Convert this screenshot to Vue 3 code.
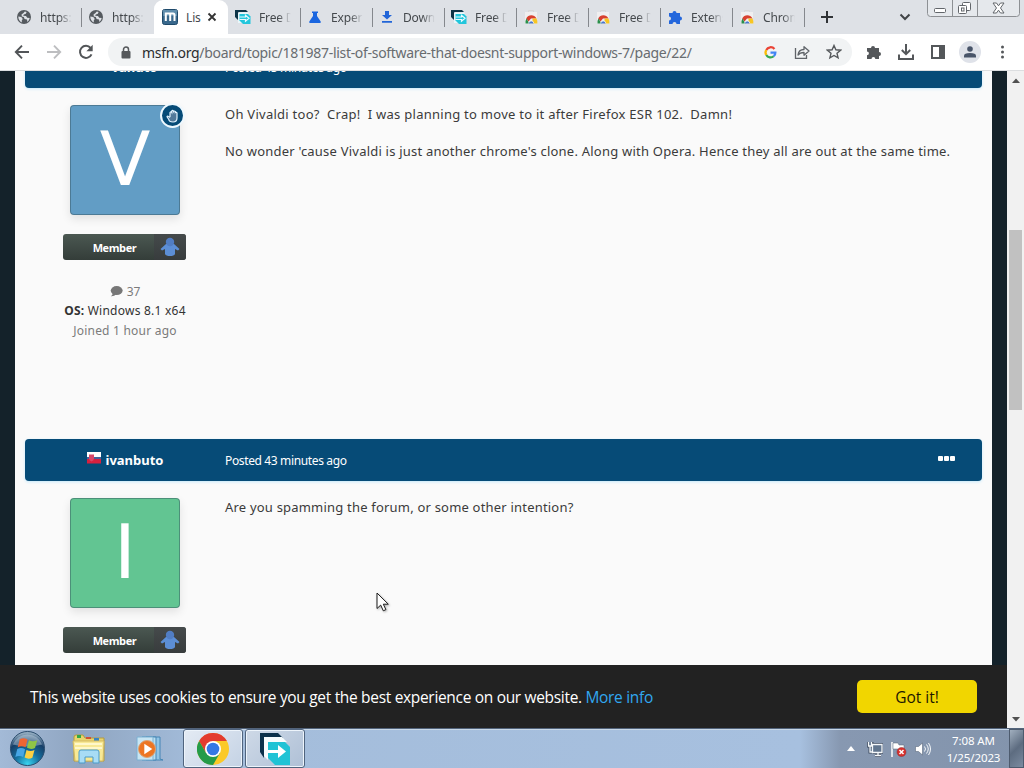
<script setup>
import { ref } from 'vue'

const tabs = ref([
  { icon: 'globe', title: 'https://' },
  { icon: 'globe', title: 'https://' },
  { icon: 'msfn', title: 'Lis', active: true },
  { icon: 'fdm', title: 'Free D' },
  { icon: 'flask', title: 'Experi' },
  { icon: 'down', title: 'Downl' },
  { icon: 'fdm', title: 'Free D' },
  { icon: 'store', title: 'Free D' },
  { icon: 'store', title: 'Free D' },
  { icon: 'puzzle', title: 'Extens' },
  { icon: 'store', title: 'Chrom' },
])

const posts = ref([
  {
    id: 1,
    author: 'vanuto',
    posted: 'Posted 45 minutes ago',
    letter: 'V',
    color: 'blue',
    isNew: true,
    paragraphs: [
      { id: 'a', text: 'Oh Vivaldi too?\u00a0 Crap!\u00a0 I was planning to move to it after Firefox ESR 102.\u00a0 Damn!' },
      { id: 'b', text: "No wonder 'cause Vivaldi is just another chrome's clone. Along with Opera. Hence they all are out at the same time." },
    ],
    stats: { count: 37, os: 'Windows 8.1 x64', joined: 'Joined 1 hour ago' },
  },
  {
    id: 2,
    author: 'ivanbuto',
    posted: 'Posted 43 minutes ago',
    letter: 'I',
    color: 'green',
    paragraphs: [{ id: 'c', text: 'Are you spamming the forum, or some other intention?' }],
  },
])
</script>

<template>
  <div class="screen">
    <header class="tabstrip">
      <div v-for="(tab, i) in tabs" :key="i" class="tab" :class="{ 'tab--active': tab.active, 'tab--before': i === 1 }">
        <svg class="tab__icon" viewBox="0 0 16 16">
          <g v-if="tab.icon === 'globe'">
            <circle cx="8" cy="8" r="7" fill="#555a5f" />
            <path d="M2.300 7.500l3 .6 1.500 1.800-1 1.400v2.200Q2.300 11.500 2.300 7.500zM8.800 2.400l1.800.7-.8 1.700-2 .6-.6 1.400 2.800.3 1.200 1.700 2.500.2q-.3 2.600-2.300 3.900l-.4-2.400-2.400-.6-.8-2-2-.5-.3-1.800 2-1.500z" fill="#dee1e6" />
          </g>
          <g v-else-if="tab.icon === 'msfn'">
            <rect x=".5" y=".5" width="15" height="15" rx="2" fill="#39688c" stroke="#1f4a6b" />
            <path d="M1 1h14v6H1z" fill="#6f9cb9" opacity=".7" />
            <path d="M3.800 12V4.500h7.200q1.500 0 1.500 1.500v6M8.200 4.500V12" fill="none" stroke="#fff" stroke-width="2" />
          </g>
          <g v-else-if="tab.icon === 'fdm'">
            <path d="M0 1h11l2 2H3.500v8.500L0 8z" fill="#0d3447" />
            <path d="M3 3.500h10.500V14H3z" fill="#e9f7fa" />
            <path d="M4.500 5H13l2.500 2.500V15H8l-3.500-3.500z" fill="#22c6dc" />
            <path d="M4.500 8h6V6.200l3.500 3-3.500 3v-1.700h-6" fill="none" stroke="#e9fbff" stroke-width="1.200" />
          </g>
          <path v-else-if="tab.icon === 'flask'" d="M5 2.500h6V4h-1v3l3.700 5.500q.6 1.500-1 1.500H3.300q-1.600 0-1-1.500L6 7V4H5z" fill="#1a66e0" />
          <path v-else-if="tab.icon === 'down'" d="M6 2h4v4h3l-5 4.500L3 6h3zM3 12h10v1.800H3z" fill="#2265d8" />
          <g v-else-if="tab.icon === 'store'">
            <path d="M2 3h12v11.500H2z" fill="#f0eff0" />
            <path d="M5.500 3V1.500h5V3" fill="none" stroke="#d8d6d6" />
            <path d="M3.200 9.500Q5 6.200 8.300 6.200T13.500 9.500H8l-2.500 3z" fill="#d8402f" />
            <path d="M2.500 14.500q-.3-3 .9-5l3.100 5z" fill="#2a8f4c" />
            <path d="M9.500 9.500h4q1.200 2.300.8 5H9.500z" fill="#f8c623" />
            <path d="M5.600 14.500a2.600 2.600 0 0 1 5.200 0" fill="#4a76cf" stroke="#f5f5f5" stroke-width=".8" />
          </g>
          <path v-else d="M2 4h3.500a2 2 0 1 1 4 0H13v3.500a2 2 0 1 1 0 4V15H9.500a2 2 0 0 0-4 0H2v-3.500a2 2 0 0 0 0-4z" fill="#2467dc" />
        </svg>
        <span class="tab__title">{{ tab.title }}</span>
        <svg v-if="tab.active" class="tab__close" viewBox="0 0 10 10"><path d="M1.500 1.500l7 7m0-7l-7 7" stroke="#333" stroke-width="1.800" /></svg>
      </div>
      <svg class="tabstrip__plus" viewBox="0 0 14 14"><path d="M7 1v12M1 7h12" stroke="#303336" stroke-width="2" /></svg>
      <svg class="tabstrip__chevron" viewBox="0 0 12 12"><path d="M1.500 3.500L6 8l4.500-4.500" fill="none" stroke="#414447" stroke-width="2" /></svg>
      <svg class="tabstrip__window" viewBox="0 0 93 17">
        <path d="M.5 0v13.500q0 3 3 3h86q3 0 3-3V0M25.500 0v16M50.500 0v16" fill="#e5e8ec" stroke="#8d9094" />
        <g fill="#fff" stroke="#62666b">
          <rect x="7.500" y="8.500" width="11" height="4" rx="1" />
          <rect x="35.500" y="2.500" width="8" height="8" rx="1" />
          <rect x="31.500" y="5.500" width="8" height="8" rx="1" />
          <rect x="34.500" y="8" width="2.500" height="3" />
          <path d="M66 3h3.500l2 2.800 2-2.800H77l-3.500 5 3.500 5h-3.500l-2-2.800-2 2.800H66l3.500-5z" />
        </g>
      </svg>
    </header>

    <nav class="toolbar">
      <svg class="toolbar__nav" viewBox="0 0 16 16"><path d="M15 8H2m6-6.300L1.800 8 8 14.300" fill="none" stroke="#525558" stroke-width="1.900" /></svg>
      <svg class="toolbar__nav" viewBox="0 0 16 16"><path d="M1 8h13M8 1.700L14.200 8 8 14.300" fill="none" stroke="#bdbec0" stroke-width="1.900" /></svg>
      <svg class="toolbar__nav" viewBox="0 0 16 16"><path d="M13.500 10.300A6 6 0 1 1 12.600 4" fill="none" stroke="#525558" stroke-width="2" /><path d="M14.700.8v6.400H8.400z" fill="#525558" /></svg>
      <div class="omnibox">
        <svg class="omnibox__lock" viewBox="0 0 10 13"><path d="M2.500 6V3.500a2.500 2.500 0 0 1 5 0V6" fill="none" stroke="#55585b" stroke-width="1.500" /><rect x=".5" y="5" width="9" height="7.500" rx="1" fill="#55585b" /></svg>
        <span class="omnibox__url"><b>msfn.org</b>/board/topic/181987-list-of-software-that-doesnt-support-windows-7/page/22/</span>
        <svg class="omnibox__icon omnibox__icon--google" viewBox="0 0 16 16" fill="none" stroke-width="2.400">
          <path d="M12.200 4.300A5.200 5.200 0 0 0 3.500 5.300" stroke="#ea4335" />
          <path d="M3.500 5.300a5.200 5.200 0 0 0 0 5.400" stroke="#fbbc05" />
          <path d="M3.500 10.700a5.200 5.200 0 0 0 7.900 1.300" stroke="#34a853" />
          <path d="M11.400 12A5 5 0 0 0 13.200 8H8" stroke="#4285f4" />
        </svg>
        <svg class="omnibox__icon" viewBox="0 0 16 16" fill="none" stroke="#5f6368" stroke-width="1.300"><path d="M1.500 4v10.300h11V11" /><path d="M4 11c.4-3.700 2.500-5.500 6-5.500V2.700L15 7l-5 4.200V8.500C7.500 8.500 5.500 9 4 11z" stroke-linejoin="round" /></svg>
        <svg class="omnibox__icon omnibox__icon--star" viewBox="0 0 16 16"><path d="M8 1.500l1.900 4.300 4.700.4-3.600 3.100 1.100 4.600L8 11.500l-4.100 2.400L5 9.300 1.400 6.200l4.700-.4z" fill="none" stroke="#55585b" stroke-width="1.400" /></svg>
      </div>
      <svg class="toolbar__icon" viewBox="0 0 16 16"><path d="M1 4h4a2 2 0 1 1 4 0h4v4a2 2 0 1 1 0 4v3H9.300a1.900 1.900 0 0 0-3.800 0H1v-3.800a1.900 1.900 0 0 0 0-3.800z" fill="#54575a" /></svg>
      <svg class="toolbar__icon" viewBox="0 0 16 16"><path d="M8 0v10M3.800 6L8 10.200 12.200 6M1 10.500V15h14v-4.500" fill="none" stroke="#54575a" stroke-width="2" /></svg>
      <svg class="toolbar__icon" viewBox="0 0 16 16"><path d="M1 1h14v14H1zm2 2v10h6V3z" fill="#54575a" fill-rule="evenodd" /></svg>
      <span class="toolbar__profile"><svg viewBox="0 0 12 12"><circle cx="6" cy="3" r="2.800" fill="#485469" /><path d="M0 11.500V9.800Q0 7 6 7t6 2.800v1.700z" fill="#485469" /></svg></span>
      <svg class="toolbar__icon toolbar__icon--menu" viewBox="0 0 16 16" fill="#54575a"><circle cx="8.500" cy="3" r="1.500" /><circle cx="8.500" cy="8" r="1.500" /><circle cx="8.500" cy="13" r="1.500" /></svg>
    </nav>

    <div class="viewport">
      <main class="page">
        <div class="topic">
          <article v-for="post in posts" :key="post.id" class="post">
            <div class="post__header">
              <h3 class="post__author">
                <svg class="flag" viewBox="0 0 14 12"><path d="M0 0h14v5H0z" fill="#fff" /><path d="M0 5h14v3H0z" fill="#45609b" /><path d="M0 7h14v4.500H0z" fill="#d6213f" /><path d="M2 2.500h5v4Q7 8.500 4.500 9.500 2 8.500 2 6.500z" fill="#d9476a" /></svg>
                <span>{{ post.author }}</span>
              </h3>
              <span class="post__date">{{ post.posted }}</span>
              <span v-if="post.id !== 1" class="post__menu"><i></i><i></i><i></i></span>
            </div>
            <div class="post__body">
              <aside class="author">
                <div class="avatar" :class="'avatar--' + post.color">
                  <span class="avatar__letter">{{ post.letter }}</span>
                  <span v-if="post.isNew" class="avatar__badge">
                    <svg viewBox="0 0 14 14"><path d="M4 8V3.500q.8-1.300 1.700 0V2q.9-1.400 1.800 0v.6q.9-1.200 1.800 0v1q1.100-.8 1.700.4V9q0 4-4 4T2.800 10.500L1 7.800q.6-1.500 3 .7" fill="#52799a" stroke="#e2f3ff" stroke-width="1.200" /></svg>
                  </span>
                </div>
                <div class="rank">
                  <span class="rank__name">Member</span>
                  <span class="rank__icon">
                    <svg viewBox="0 0 20 20"><path d="M6 7h8l5.500 5-1.500 1.500-3-1.500v5q-1 2-5 2t-5-2v-5l-3 1.500L.5 12z" fill="#5c8ed6" /><circle cx="10" cy="5" r="4.200" fill="#517dc4" /></svg>
                  </span>
                </div>
                <ul v-if="post.stats" class="stats">
                  <li class="stats__muted">
                    <svg class="stats__bubble" viewBox="0 0 14 12"><ellipse cx="7.200" cy="5" rx="6.500" ry="4.900" fill="#777" /><path d="M3 7q0 3-2.200 4.200Q4.500 11.500 7 8.800z" fill="#777" /></svg>
                    <span>{{ post.stats.count }}</span>
                  </li>
                  <li class="stats__os"><b>OS:</b> {{ post.stats.os }}</li>
                  <li class="stats__muted stats__joined">{{ post.stats.joined }}</li>
                </ul>
              </aside>
              <div class="post__content">
                <p v-for="p in post.paragraphs" :key="p.id" :class="'line line--' + p.id">{{ p.text }}</p>
              </div>
            </div>
          </article>
        </div>
        <div class="cookies">
          <span class="cookies__text">This website uses cookies to ensure you get the best experience on our website. <a>More info</a></span>
          <button class="cookies__button">Got it!</button>
        </div>
      </main>
      <div class="scrollbar">
        <svg viewBox="0 0 8 5"><path d="M0 5l4-4.500L8 5z" fill="#505050" /></svg>
        <div class="scrollbar__thumb"></div>
        <svg viewBox="0 0 8 5"><path d="M0 0l4 4.500L8 0z" fill="#505050" /></svg>
      </div>
    </div>

    <footer class="taskbar">
      <div class="taskbar__start">
        <svg viewBox="0 0 38 38">
          <defs>
            <radialGradient id="orb" cx=".5" cy=".95" r=".9">
              <stop offset="0" stop-color="#39d4ef" />
              <stop offset=".4" stop-color="#15709f" />
              <stop offset=".75" stop-color="#173f68" />
              <stop offset="1" stop-color="#8fa9be" />
            </radialGradient>
          </defs>
          <circle cx="19" cy="19" r="17.500" fill="url(#orb)" stroke="#294b6c" />
          <path d="M4 15A16 16 0 0 1 34 15Q19 19 4 15z" fill="#d5e3ed" opacity=".4" />
          <path d="M11 9.500q4-2 8 .3l-2 8q-4-2-8 0z" fill="#ee6534" />
          <path d="M20.500 10.500q4 2 8.500 0l-2.300 8q-4 2-8.200-.2z" fill="#90c646" />
          <path d="M8.500 19.500q4-2 8 .2l-2 8q-4-2-8 0z" fill="#47a6e6" />
          <path d="M18 20.500q4 2 8.200 0l-2.200 8q-4 2-8-.2z" fill="#fbd043" />
        </svg>
      </div>
      <div class="taskbar__item taskbar__item--explorer">
        <svg viewBox="0 0 34 30">
          <path d="M2 3q0-2 2-2h7l2 3h19v23H2z" fill="#e9d46e" stroke="#b49b3f" />
          <path d="M5 1h4v3H5z" fill="#31a845" /><path d="M14 3h5v2h-5z" fill="#d05334" /><path d="M22 4h5v3h-5z" fill="#3784c4" />
          <path d="M1 7h31l-1 20H3z" fill="#f8e995" stroke="#d2b961" />
          <path d="M3 10h27M3 14h27" stroke="#fff8ca" stroke-width="2" />
          <path d="M7 29V18q0-2 2-2h16q2 0 2 2v11h-6v-6h-8v6z" fill="#a8dcf5" stroke="#4b9bc9" />
        </svg>
      </div>
      <div class="taskbar__item taskbar__item--player">
        <svg viewBox="0 0 28 26">
          <path d="M10 1h14v22l3 1H10z" fill="#91c5e6" stroke="#4786b5" /><path d="M6 1h14v23H6z" fill="#b8def0" stroke="#4786b5" /><path d="M1 1h16v23H1z" fill="#c8e5f3" stroke="#7bb0d2" />
          <circle cx="11" cy="13" r="8.500" fill="#ed7522" stroke="#d9a377" /><path d="M8.300 7.800l8 5.200-8 5.200z" fill="#fff" />
        </svg>
      </div>
      <div class="taskbar__item taskbar__item--open">
        <svg viewBox="0 0 32 32">
          <circle cx="16" cy="16" r="16" fill="#fbc928" />
          <path d="M2.140 8A16 16 0 0 1 29.860 8H16l-6.930 12z" fill="#e33b2e" />
          <path d="M2.140 8A16 16 0 0 0 16 32l6.930-12H9.070z" fill="#259b49" />
          <circle cx="16" cy="16" r="8" fill="#fff" /><circle cx="16" cy="16" r="6.300" fill="#3478e5" />
        </svg>
      </div>
      <div class="taskbar__item taskbar__item--open taskbar__item--fdm">
        <svg viewBox="0 0 32 32">
          <path d="M1 0h18l5 5H5v20l-4-6z" fill="#0c314b" />
          <path d="M5 4h18l5 5H9v18l-4-4z" fill="#f7fcfd" />
          <path d="M9 9h17l5 5v18H16l-7-7z" fill="#20c3d5" />
          <path d="M9 17h10v-5l8 6.500-8 6.500v-5H9z" fill="#fff" />
        </svg>
      </div>
      <div class="tray">
        <svg class="tray__up" viewBox="0 0 8 5"><path d="M0 5l4-5 4 5z" fill="#fff" /></svg>
        <svg class="tray__icon" viewBox="0 0 16 16"><path d="M6 3.500h9v8H6M8 14.500h6M11 11.500v3M1 1v4h4V1M3 5v6h4" fill="none" stroke="#3f4d60" stroke-width="3" /><path d="M5.500 3.500H15v8H5.500zM8 14.500h6M11 11.500v3M1.500 1v4h3V1M3 5v6h3" fill="#60758e" stroke="#f5f8fa" stroke-width="1.300" /></svg>
        <svg class="tray__icon" viewBox="0 0 16 16"><path d="M1 1v15" stroke="#fff" stroke-width="1.500" /><path d="M2 2h5l1 2h5v6H9L7 8H2z" fill="#fff" stroke="#576477" stroke-width=".5" /><circle cx="10.500" cy="11" r="4.500" fill="#d9302c" stroke="#8a2d32" stroke-width=".5" /><path d="M8.500 9l4 4m0-4l-4 4" stroke="#fff" stroke-width="1.500" /></svg>
        <svg class="tray__icon" viewBox="0 0 16 16"><path d="M.5 5.500h3L7.500 2v12l-4-3.500h-3z" fill="#fff" stroke="#4b596c" stroke-width=".5" /><path d="M9.500 5.500q2 2.500 0 5M11.500 3.500q3.500 4.500 0 9M13.500 2q4 6 0 12" fill="none" stroke="#f5f8fa" /></svg>
      </div>
      <div class="clock">
        <span>7:08 AM</span>
        <span>1/25/2023</span>
      </div>
      <div class="taskbar__desktop"></div>
    </footer>

    <svg class="cursor" viewBox="0 0 14 20"><path d="M1 1v15.500l3.700-3.400 2.600 5.700 2.600-1.200-2.600-5.400h5z" fill="#fff" stroke="#1b1b1b" /></svg>
  </div>
</template>

<style>
body {
  margin: 0;
  overflow: hidden;
}
</style>

<style scoped>
.screen {
  position: relative;
  width: 1024px;
  height: 768px;
  display: flex;
  flex-direction: column;
  overflow: hidden;
  font-family: "Noto Sans", "Open Sans", sans-serif;
}

svg {
  display: block;
  flex: none;
}

/* tabs */
.tabstrip {
  height: 34px;
  box-sizing: border-box;
  padding-left: 10px;
  flex: none;
  display: flex;
  align-items: center;
  background: #dee1e6;
}

.tab {
  width: 72px;
  height: 34px;
  box-sizing: border-box;
  padding-left: 6px;
  display: flex;
  align-items: center;
  gap: 8px;
  flex: none;
  font-size: 12px;
  color: #45494d;
  background: linear-gradient(#85888d, #85888d) no-repeat right 8px / 1px 19px;
}

.tab__icon {
  width: 16px;
  height: 16px;
}

.tab__title {
  width: 32px;
  overflow: hidden;
  white-space: nowrap;
  letter-spacing: -0.15px;
  mask-image: linear-gradient(90deg, #000 60%, transparent);
}

.tab--before {
  background: none;
}

.tab--active {
  width: 74px;
  margin-right: 1px;
  padding-left: 8px;
  background: #fff;
  border-radius: 9px 9px 0 0;
}

.tab--active .tab__title {
  width: 15px;
  mask-image: none;
}

.tab__close {
  width: 10px;
  height: 10px;
  margin-left: -2px;
}

.tabstrip__plus {
  width: 14px;
  height: 14px;
  margin-left: 15px;
}

.tabstrip__chevron {
  width: 12px;
  height: 12px;
  margin-left: auto;
}

.tabstrip__window {
  width: 93px;
  height: 17px;
  margin: 0 4px 0 16px;
  align-self: flex-start;
}

/* toolbar */
.toolbar {
  height: 37px;
  box-sizing: border-box;
  padding: 0 14px;
  border-bottom: 1px solid #dcdee0;
  flex: none;
  display: flex;
  align-items: center;
  gap: 16px;
  background: #fff;
}

.toolbar__nav,
.toolbar__icon {
  width: 16px;
  height: 16px;
}

.omnibox {
  width: 744px;
  height: 28px;
  box-sizing: border-box;
  padding: 0 10px 0 13px;
  margin-left: -2px;
  margin-right: -2px;
  border-radius: 14px;
  flex: none;
  display: flex;
  align-items: center;
  background: #f1f3f4;
}

.omnibox__lock {
  width: 10px;
  height: 13px;
}

.omnibox__url {
  margin: 0 auto 0 11px;
  font-size: 14px;
  color: #686c70;
  white-space: nowrap;
  letter-spacing: -0.305px;
}

.omnibox__url b {
  font-weight: 400;
  color: #2a2c2e;
}

.omnibox__icon {
  width: 16px;
  height: 16px;
  margin-left: 16px;
}

.omnibox__icon--google {
  width: 15px;
  height: 15px;
}

.toolbar__profile {
  width: 22px;
  height: 22px;
  margin: 0 -3px;
  border-radius: 50%;
  display: grid;
  place-items: center;
  background: #dfe2e9;
}

.toolbar__profile svg {
  width: 12px;
  height: 12px;
}

/* page */
.viewport {
  height: 657px;
  flex: none;
  display: flex;
}

.page {
  width: 1007px;
  height: 657px;
  display: flex;
  flex-direction: column;
  background: #14222a;
}

.topic {
  height: 594px;
  margin: 0 15px;
  overflow: hidden;
  background: #fafafa;
}

.post {
  height: 393px;
  padding: 0 10px;
}

.post:first-child {
  margin-top: -25px;
}

.post__header {
  height: 42px;
  border-radius: 4px;
  display: flex;
  align-items: center;
  background: #064b77;
  box-shadow: 0 1px 3px #c5e9fb;
  color: #fff;
}

.post__author {
  width: 200px;
  margin: 0;
  display: flex;
  justify-content: center;
  gap: 5px;
  font-size: 13px;
  font-weight: 700;
}

.flag {
  width: 14px;
  height: 12px;
  margin-top: 1px;
}

.post__date {
  padding-top: 1px;
  font-size: 12px;
  letter-spacing: -0.36px;
}

.post__menu {
  margin: -3px 27px 0 auto;
  display: flex;
  gap: 1px;
}

.post__menu i {
  width: 5px;
  height: 5px;
  border-radius: 1px;
  background: #fff;
}

.post__body {
  display: flex;
}

.author {
  width: 200px;
  padding-top: 17px;
  flex: none;
  display: flex;
  flex-direction: column;
  align-items: center;
}

.avatar {
  position: relative;
  width: 110px;
  height: 110px;
  box-sizing: border-box;
  border: 1px solid rgba(50, 80, 90, 0.45);
  border-radius: 4px;
  display: flex;
  justify-content: center;
  box-shadow: 0 4px 10px rgba(0, 0, 0, 0.1);
}

.avatar--blue {
  background: #629dc5;
}

.avatar--green {
  background: #62c592;
}

.avatar__letter {
  font-family: "DejaVu Sans", sans-serif;
  font-size: 74px;
  line-height: 106px;
  color: #fff;
}

.avatar__badge {
  position: absolute;
  top: -3px;
  right: -6px;
  width: 21px;
  height: 21px;
  border: 2px solid #eff9ff;
  border-radius: 50%;
  display: grid;
  place-items: center;
  background: #064b77;
}

.avatar__badge svg {
  width: 14px;
  height: 14px;
}

.rank {
  width: 123px;
  height: 26px;
  margin-top: 19px;
  margin-right: 1px;
  border-radius: 3px;
  overflow: hidden;
  display: flex;
  align-items: center;
  background: linear-gradient(#4b5852, #343d39);
}

.rank__name {
  width: 91px;
  padding-left: 12px;
  box-sizing: border-box;
  text-align: center;
  font: 700 11px "Open Sans", sans-serif;
  letter-spacing: -0.4px;
  color: #fff;
}

.rank__icon {
  width: 32px;
  height: 26px;
  display: grid;
  place-items: center;
  background: linear-gradient(#454a4b, #383c3d);
}

.rank__icon svg {
  width: 20px;
  height: 20px;
}

.stats {
  width: 200px;
  margin: 22px 0 0;
  padding: 0;
  list-style: none;
  text-align: center;
  font-size: 12px;
  line-height: 19.500px;
  color: #333;
  white-space: nowrap;
}

.stats li:first-child {
  height: 19px;
  display: flex;
  align-items: center;
  justify-content: center;
  gap: 4px;
}

.stats__muted {
  color: #7b7b7b;
}

.stats__os {
  letter-spacing: 0.24px;
}

.stats__joined {
  letter-spacing: 0.22px;
}

.stats__bubble {
  width: 13px;
  height: 11px;
}

.post__content {
  padding-top: 17px;
}

.line {
  margin: 0 0 18px;
  font-size: 13px;
  line-height: 19px;
  letter-spacing: 0.22px;
  color: #3b3b3b;
  white-space: nowrap;
}

.line--a {
  letter-spacing: 0.265px;
}

.line--c {
  letter-spacing: 0.2px;
}

/* cookie bar */
.cookies {
  height: 63px;
  padding: 0 30px;
  display: flex;
  align-items: center;
  justify-content: space-between;
  background: #222;
  color: #fff;
  font-family: "Open Sans", sans-serif;
}

.cookies__text {
  font-size: 15.500px;
  letter-spacing: -0.32px;
  white-space: nowrap;
}

.cookies__text a {
  color: #31a8f0;
}

.cookies__button {
  width: 120px;
  height: 33px;
  border: 0;
  border-radius: 5px;
  background: #f1d600;
  color: #1d1800;
  font: 15.500px "Open Sans", sans-serif;
}

/* scrollbar */
.scrollbar {
  width: 17px;
  height: 657px;
  box-sizing: border-box;
  padding: 7px 0;
  display: flex;
  flex-direction: column;
  align-items: center;
  justify-content: space-between;
  background: #f1f1f1;
}

.scrollbar svg {
  width: 8px;
  height: 5px;
}

.scrollbar__thumb {
  width: 13px;
  height: 180px;
  margin-bottom: 307px;
  margin-top: 147px;
  flex: none;
  background: #c1c1c1;
}

/* taskbar */
.taskbar {
  height: 40px;
  box-sizing: border-box;
  border-top: 1px solid #52637a;
  flex: none;
  display: flex;
  align-items: center;
  box-shadow: inset 0 1px #c7d7e8;
  background: linear-gradient(90deg, #a3bad7 0, #8fa5c1 80px, #a4bddb 200px, #a7c0df 800px, #8798b1 840px, #8394ac 100%);
}

.taskbar__start {
  width: 54px;
  display: grid;
  place-items: center;
}

.taskbar__start svg {
  width: 37px;
  height: 37px;
}

.taskbar__item {
  width: 60px;
  height: 39px;
  box-sizing: border-box;
  display: grid;
  place-items: center;
}

.taskbar__item--explorer {
  width: 70px;
}

.taskbar__item--explorer svg {
  width: 34px;
  height: 30px;
}

.taskbar__item--player {
  width: 51px;
  margin-right: 8px;
}

.taskbar__item--player svg {
  width: 28px;
  height: 26px;
}

.taskbar__item--open {
  margin-right: 2px;
  border: 1px solid #50647e;
  border-radius: 3px;
  background: linear-gradient(135deg, #e4ebf4, #c4d2e4);
  box-shadow: inset 0 0 0 1px #edf4fb;
}

.taskbar__item--open svg {
  width: 32px;
  height: 32px;
}

.taskbar__item--fdm {
  background: linear-gradient(135deg, #ced9e7, #afc0d6);
}

.tray {
  margin-left: auto;
  display: flex;
  align-items: center;
  gap: 8px;
}

.tray__up {
  width: 8px;
  height: 5px;
  margin-right: 4px;
}

.tray__icon {
  width: 16px;
  height: 16px;
}

.clock {
  width: 78px;
  box-sizing: border-box;
  padding-left: 7px;
  display: flex;
  flex-direction: column;
  align-items: center;
  font-size: 11.500px;
  line-height: 17px;
  letter-spacing: -0.1px;
  color: #fff;
}

.taskbar__desktop {
  width: 15px;
  height: 39px;
  box-sizing: border-box;
  border: 1px solid #4d5b6e;
  background: linear-gradient(135deg, #a1afbf, #5d6c80 50%, #7b8ba0);
}

.cursor {
  position: absolute;
  left: 376px;
  top: 592px;
  width: 14px;
  height: 20px;
  filter: drop-shadow(1px 1px 1px rgba(0, 0, 0, 0.3));
}
</style>
